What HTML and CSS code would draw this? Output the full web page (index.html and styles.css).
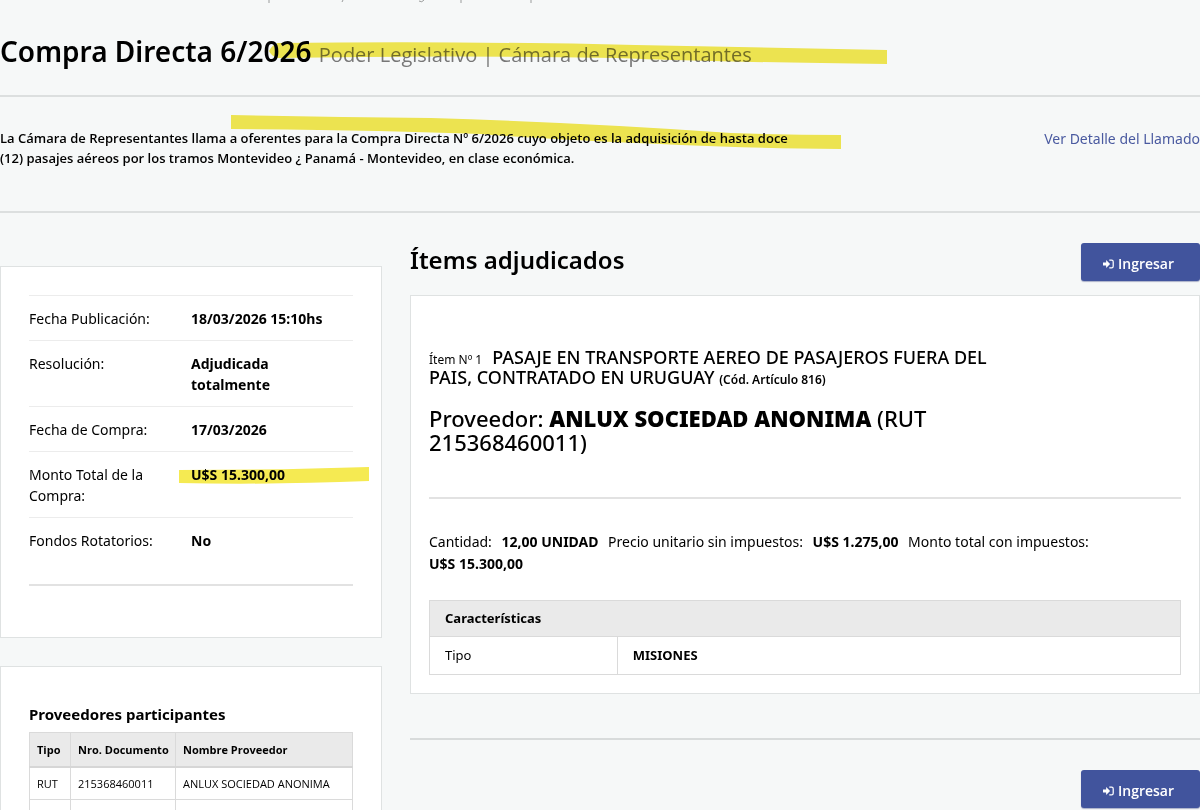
FILE: index.html
```html
<!DOCTYPE html>
<html lang="es">

<head>
  <meta charset="UTF-8">
  <meta name="viewport" content="width=device-width, initial-scale=1.0">
  <title>Compra Directa 6/2026</title>
  <link rel="stylesheet" href="styles.css">
</head>

<body>
  <svg class="symbols" aria-hidden="true">
    <symbol id="sign-in" viewBox="0 0 14 12">
      <path d="M0 4h4V1l5 5-5 5V8H0z" fill="currentColor"/>
      <path d="M8 1h3a2 2 0 0 1 2 2v6a2 2 0 0 1-2 2H8" fill="none" stroke="currentColor" stroke-width="1.6"/>
    </symbol>
  </svg>

  <header class="page-header">
    <svg class="edge" viewBox="0 0 300 4" aria-hidden="true">
      <path d="M19 0v3M93 0l-1 2M169 1q3 2 5-1M211 0v3M281 0v3"/>
    </svg>
    <h1>Compra Directa 6/2026 <small>Poder Legislativo | Cámara de Representantes</small></h1>
    <svg class="marker marker-title" viewBox="0 0 624 22" preserveAspectRatio="none" aria-hidden="true">
      <path d="M9 1 Q200 -1 370 3 L624 8 V22 Q450 20 350 16 Q180 13 9 16 Q2 14 0 9 Q3 3 9 1z"/>
    </svg>
  </header>

  <section class="summary">
    <p>La Cámara de Representantes llama a oferentes para la Compra Directa Nº 6/2026 cuyo objeto es la adquisición de hasta doce (12) pasajes aéreos por los tramos Montevideo ¿ Panamá - Montevideo, en clase económica.</p>
    <a href="#">Ver Detalle del Llamado</a>
    <svg class="marker marker-summary" viewBox="0 0 610 34" preserveAspectRatio="none" aria-hidden="true">
      <path d="M0 0 Q100 2 200 3 Q360 8 500 18 Q555 20 610 20 V34 Q520 33 450 30 Q320 25 250 19 Q150 15 0 14z"/>
    </svg>
  </section>

  <div class="columns">
    <aside class="sidebar">
      <div class="card">
        <dl class="details">
          <div class="row">
            <dt>Fecha Publicación:</dt>
            <dd>18/03/2026 15:10hs</dd>
          </div>
          <div class="row">
            <dt>Resolución:</dt>
            <dd>Adjudicada<br>totalmente</dd>
          </div>
          <div class="row">
            <dt>Fecha de Compra:</dt>
            <dd>17/03/2026</dd>
          </div>
          <div class="row">
            <dt>Monto Total de la Compra:</dt>
            <dd>U$S 15.300,00
              <svg class="marker marker-amount" viewBox="0 0 190 18" preserveAspectRatio="none" aria-hidden="true">
                <path d="M0 3 Q100 3 190 0 V14 Q90 18 0 16z"/>
              </svg>
            </dd>
          </div>
          <div class="row">
            <dt>Fondos Rotatorios:</dt>
            <dd>No</dd>
          </div>
        </dl>
      </div>

      <div class="card providers">
        <h3>Proveedores participantes</h3>
        <table>
          <thead>
            <tr>
              <th class="col-type">Tipo</th>
              <th class="col-document">Nro. Documento</th>
              <th>Nombre Proveedor</th>
            </tr>
          </thead>
          <tbody>
            <tr>
              <td>RUT</td>
              <td>215368460011</td>
              <td>ANLUX SOCIEDAD ANONIMA</td>
            </tr>
            <tr>
              <td>&nbsp;</td>
              <td></td>
              <td></td>
            </tr>
          </tbody>
        </table>
      </div>
    </aside>

    <main class="content">
      <div class="content-head">
        <h2>Ítems adjudicados</h2>
        <button type="button" class="btn"><svg><use href="#sign-in"/></svg>Ingresar</button>
      </div>

      <article class="card item">
        <h3 class="item-title"><span class="item-number">Ítem Nº 1</span>PASAJE EN TRANSPORTE AEREO DE PASAJEROS FUERA DEL PAIS, CONTRATADO EN URUGUAY <small>(Cód. Artículo 816)</small></h3>
        <h2 class="item-provider">Proveedor: <strong>ANLUX SOCIEDAD ANONIMA</strong> (RUT 215368460011)</h2>
        <p class="amounts">
          Cantidad: <strong>12,00 UNIDAD</strong>
          Precio unitario sin impuestos: <strong>U$S 1.275,00</strong>
          Monto total con impuestos: <strong class="total">U$S 15.300,00</strong>
        </p>
        <table class="features">
          <thead>
            <tr>
              <th colspan="2">Características</th>
            </tr>
          </thead>
          <tbody>
            <tr>
              <td>Tipo</td>
              <td><strong>MISIONES</strong></td>
            </tr>
          </tbody>
        </table>
      </article>

      <div class="content-foot">
        <button type="button" class="btn"><svg><use href="#sign-in"/></svg>Ingresar</button>
      </div>
    </main>
  </div>
</body>

</html>
```

FILE: styles.css
```css
* {
  box-sizing: border-box;
}

body {
  margin: 0;
  font-family: "Noto Sans", "Open Sans", sans-serif;
  font-size: 14px;
  line-height: 21px;
  color: #000;
  background-color: #f6f8f8;
  overflow: hidden;
}

h1, h2, h3, p, dl, dd {
  margin: 0;
}

small {
  line-height: 1;
}

.symbols {
  position: absolute;
  width: 0;
  height: 0;
}

/* yellow highlighter strokes */
.marker {
  position: absolute;
  fill: #f5ea52;
  mix-blend-mode: multiply;
  pointer-events: none;
}

.marker-title {
  left: 269px;
  top: 42px;
  width: 618px;
  height: 22px;
}

.marker-summary {
  left: 231px;
  top: 18px;
  width: 610px;
  height: 34px;
}

.marker-amount {
  left: -12px;
  top: 3px;
  width: 190px;
  height: 18px;
}

.page-header {
  position: relative;
  padding-bottom: 25px;
  border-bottom: 2px solid #dcdfdf;
}

.edge {
  display: block;
  width: 300px;
  height: 4px;
  margin: 0 0 28px 250px;
  fill: none;
  stroke: #9a9c9c;
}

h1 {
  font-size: 28px;
  font-weight: 600;
  line-height: 38px;
}

h1 small {
  font-family: "Open Sans", "Noto Sans", sans-serif;
  font-size: 20px;
  font-weight: 400;
  color: #777;
}

.summary {
  position: relative;
  display: flex;
  justify-content: space-between;
  align-items: flex-start;
  padding: 31px 0 43px;
  border-bottom: 2px solid #dcdfdf;
}

.summary p {
  width: 66%;
  font-family: "Open Sans", "Noto Sans", sans-serif;
  font-size: 13px;
  font-weight: 600;
  line-height: 20px;
}

a {
  color: #4a5aa0;
  text-decoration: none;
}

.columns {
  display: flex;
  align-items: flex-start;
  gap: 28px;
}

.sidebar {
  flex: 0 0 382px;
  padding-top: 53px;
}

.content {
  flex: 1;
  padding-top: 30px;
}

.card {
  background-color: #fff;
  border: 1px solid #dfe2e2;
}

.sidebar .card {
  padding: 28px 28px 51px;
  margin-bottom: 28px;
}

.details {
  padding-bottom: 22px;
  border-bottom: 2px solid #e2e2e2;
}

.row {
  display: flex;
  padding: 12px 0 11px;
  border-top: 1px solid #ececec;
}

dt {
  flex: 0 0 50%;
  padding-right: 32px;
}

dd {
  position: relative;
  flex: 1;
  font-weight: 700;
}

table {
  width: 100%;
  border-collapse: collapse;
}

th, td {
  text-align: left;
  border: 1px solid #dadada;
}

th {
  font-weight: 700;
  background-color: #eaeaea;
}

.sidebar .providers {
  padding-top: 37px;
}

.providers h3 {
  font-size: 15px;
  font-weight: 700;
  margin-bottom: 7px;
}

.providers table {
  font-family: "Open Sans", "Noto Sans", sans-serif;
  table-layout: fixed;
}

.providers th,
.providers td {
  padding: 5px 0 5px 7px;
  font-size: 11px;
}

.providers thead th {
  padding: 6px 0 6px 7px;
  border-bottom: 2px solid #d6d6d6;
}

.col-type {
  width: 41px;
}

.col-document {
  width: 105px;
}

.content-head {
  display: flex;
  justify-content: space-between;
  align-items: flex-start;
}

h2 {
  font-size: 24px;
  font-weight: 600;
  line-height: 34px;
}

.btn {
  display: inline-flex;
  align-items: center;
  gap: 4px;
  height: 38px;
  padding: 3px 26px 0 22px;
  font: 600 14px "Open Sans", "Noto Sans", sans-serif;
  color: #fff;
  background-color: #41549d;
  border: 0;
  border-radius: 3px;
  box-shadow: 0 1px 1px #aab0c8;
  cursor: pointer;
}

.btn svg {
  width: 11px;
  height: 10px;
}

.item {
  margin-top: 14px;
  padding: 51px 18px 18px;
}

.item-title {
  max-width: 580px;
  font-size: 18px;
  font-weight: 500;
  line-height: 20px;
}

.item-number {
  margin-right: 10px;
  font-size: 12px;
  font-weight: 400;
  line-height: 1;
}

.item-title small {
  font-size: 12px;
  font-weight: 600;
}

.item-provider {
  max-width: 560px;
  margin: 19px 0 43px;
  font-size: 22px;
  font-weight: 500;
  line-height: 24px;
}

.item-provider strong {
  font-weight: 900;
}

.amounts {
  padding: 32px 0 25px;
  line-height: 22px;
  border-top: 2px solid #e2e2e2;
}

.amounts strong {
  margin: 0 6px;
}

.amounts .total {
  margin: 0;
  white-space: nowrap;
}

.features th,
.features td {
  padding: 8px 15px;
  font-size: 13px;
}

.features th {
  padding: 7px 15px;
}

.features td:first-child {
  width: 25%;
}

.content-foot {
  display: flex;
  justify-content: flex-end;
  margin-top: 44px;
  padding-top: 30px;
  border-top: 2px solid #d8dbdb;
}
```
